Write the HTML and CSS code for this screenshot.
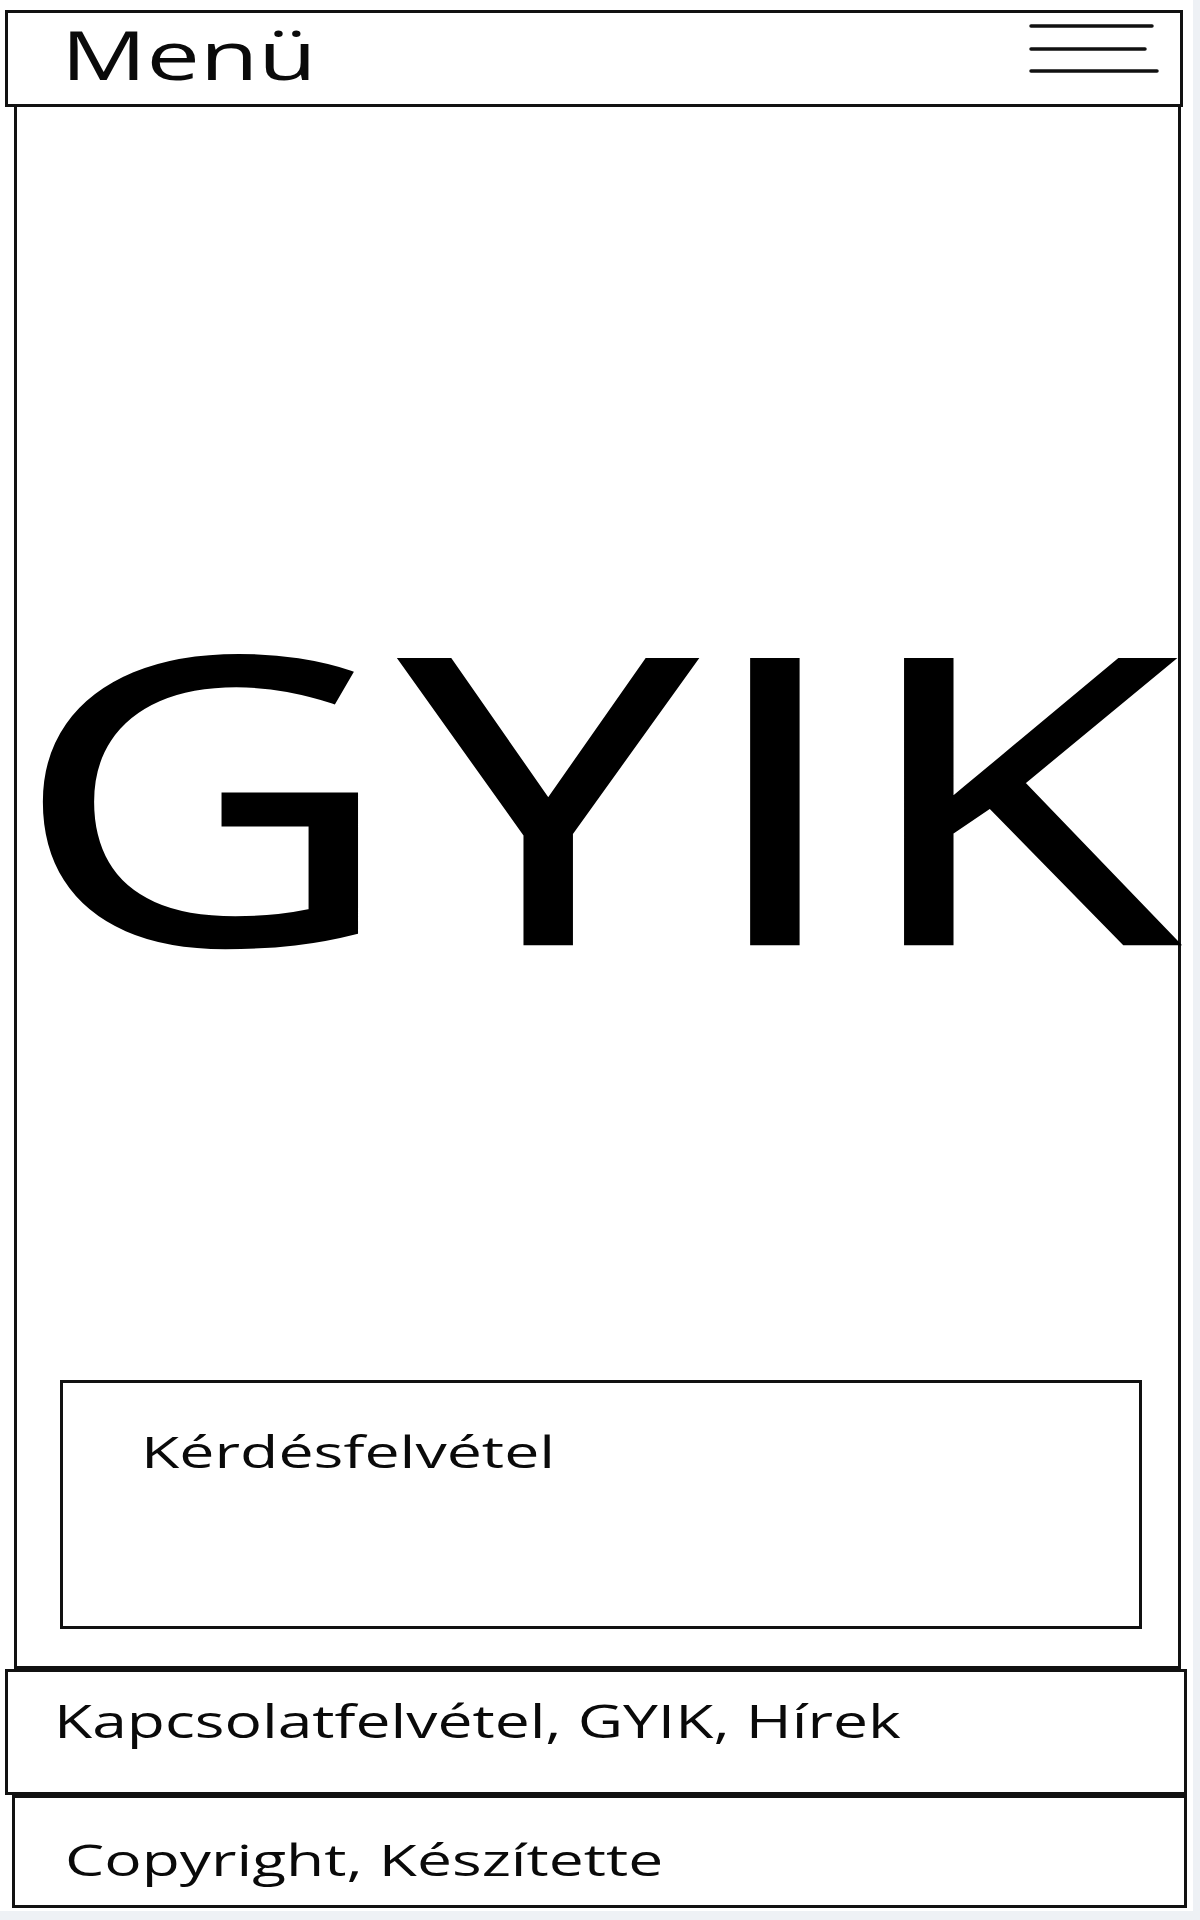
FILE: index.html
```html
<!DOCTYPE html>
<html lang="hu">
<head>
<meta charset="utf-8">
<title>GYIK</title>
<link rel="stylesheet" href="styles.css">
</head>
<body>
<div class="page">
  <header class="topbar">
    <span class="menu-label"><span class="stretch s-menu">Menü</span></span>
    <svg class="burger" width="130" height="52" viewBox="0 0 130 52" aria-hidden="true">
      <line x1="2" y1="4" x2="123" y2="4"/>
      <line x1="2" y1="27" x2="116" y2="27"/>
      <line x1="2" y1="49" x2="128" y2="49"/>
    </svg>
  </header>
  <main class="content">
    <h1 class="title"><span class="stretch s-title">GYIK</span></h1>
    <section class="ask-box">
      <span class="stretch s-ask">Kérdésfelvétel</span>
    </section>
  </main>
  <nav class="links">
    <span class="stretch s-links">Kapcsolatfelvétel, GYIK, Hírek</span>
  </nav>
  <footer class="credits">
    <span class="stretch s-credits">Copyright, Készítette</span>
  </footer>
</div>
</body>
</html>
```
FILE: styles.css
```css
html {
  background: #eef1f5;
}
body {
  margin: 0;
  font-family: "Open Sans", "Noto Sans", "DejaVu Sans", sans-serif;
  color: #0a0a0a;
}
.page {
  width: 1193px;
  height: 1911px;
  background: #ffffff;
  padding-top: 10px;
  box-sizing: border-box;
  overflow: hidden;
}
.stretch {
  display: inline-block;
  transform-origin: 0 50%;
  white-space: nowrap;
}

/* header */
.topbar {
  margin-left: 5px;
  width: 1178px;
  height: 97px;
  box-sizing: border-box;
  border: 3px solid #111;
  display: flex;
  align-items: flex-start;
  padding: 0 21px 0 53px;
}
.menu-label {
  margin-top: 11px;
  font-size: 67px;
  line-height: 60px;
}
.s-menu {
  transform: scaleX(1.42);
}
.burger {
  margin-left: auto;
  margin-top: 9px;
  stroke: #111;
  stroke-width: 3.5;
  stroke-linecap: round;
}

/* main area */
.content {
  margin-left: 14px;
  width: 1167px;
  height: 1562px;
  box-sizing: border-box;
  border: 3px solid #111;
  border-top: none;
  display: flex;
  flex-direction: column;
}
.title {
  margin: 485px 0 0 -3px;
  font-size: 396px;
  line-height: 396px;
  height: 396px;
  font-weight: 400;
  letter-spacing: 6px;
  color: #000;
  -webkit-text-stroke: 4.6px #000;
}
.s-title {
  transform: scaleX(1.32);
}
.ask-box {
  margin: 392px 0 0 43px;
  width: 1082px;
  height: 249px;
  box-sizing: border-box;
  border: 3px solid #111;
  padding: 38px 0 0 78px;
  font-size: 44px;
  line-height: 60px;
}
.s-ask {
  transform: scaleX(1.423);
}

/* bottom bars */
.links {
  margin-left: 5px;
  width: 1182px;
  height: 126px;
  box-sizing: border-box;
  border: 3px solid #111;
  padding: 17px 0 0 46px;
  font-size: 46px;
  line-height: 63px;
}
.s-links {
  transform: scaleX(1.355);
}
.credits {
  margin-left: 12px;
  width: 1175px;
  height: 113px;
  box-sizing: border-box;
  border: 3px solid #111;
  padding: 31px 0 0 50px;
  font-size: 44px;
  line-height: 60px;
}
.s-credits {
  transform: scaleX(1.416);
}
```
